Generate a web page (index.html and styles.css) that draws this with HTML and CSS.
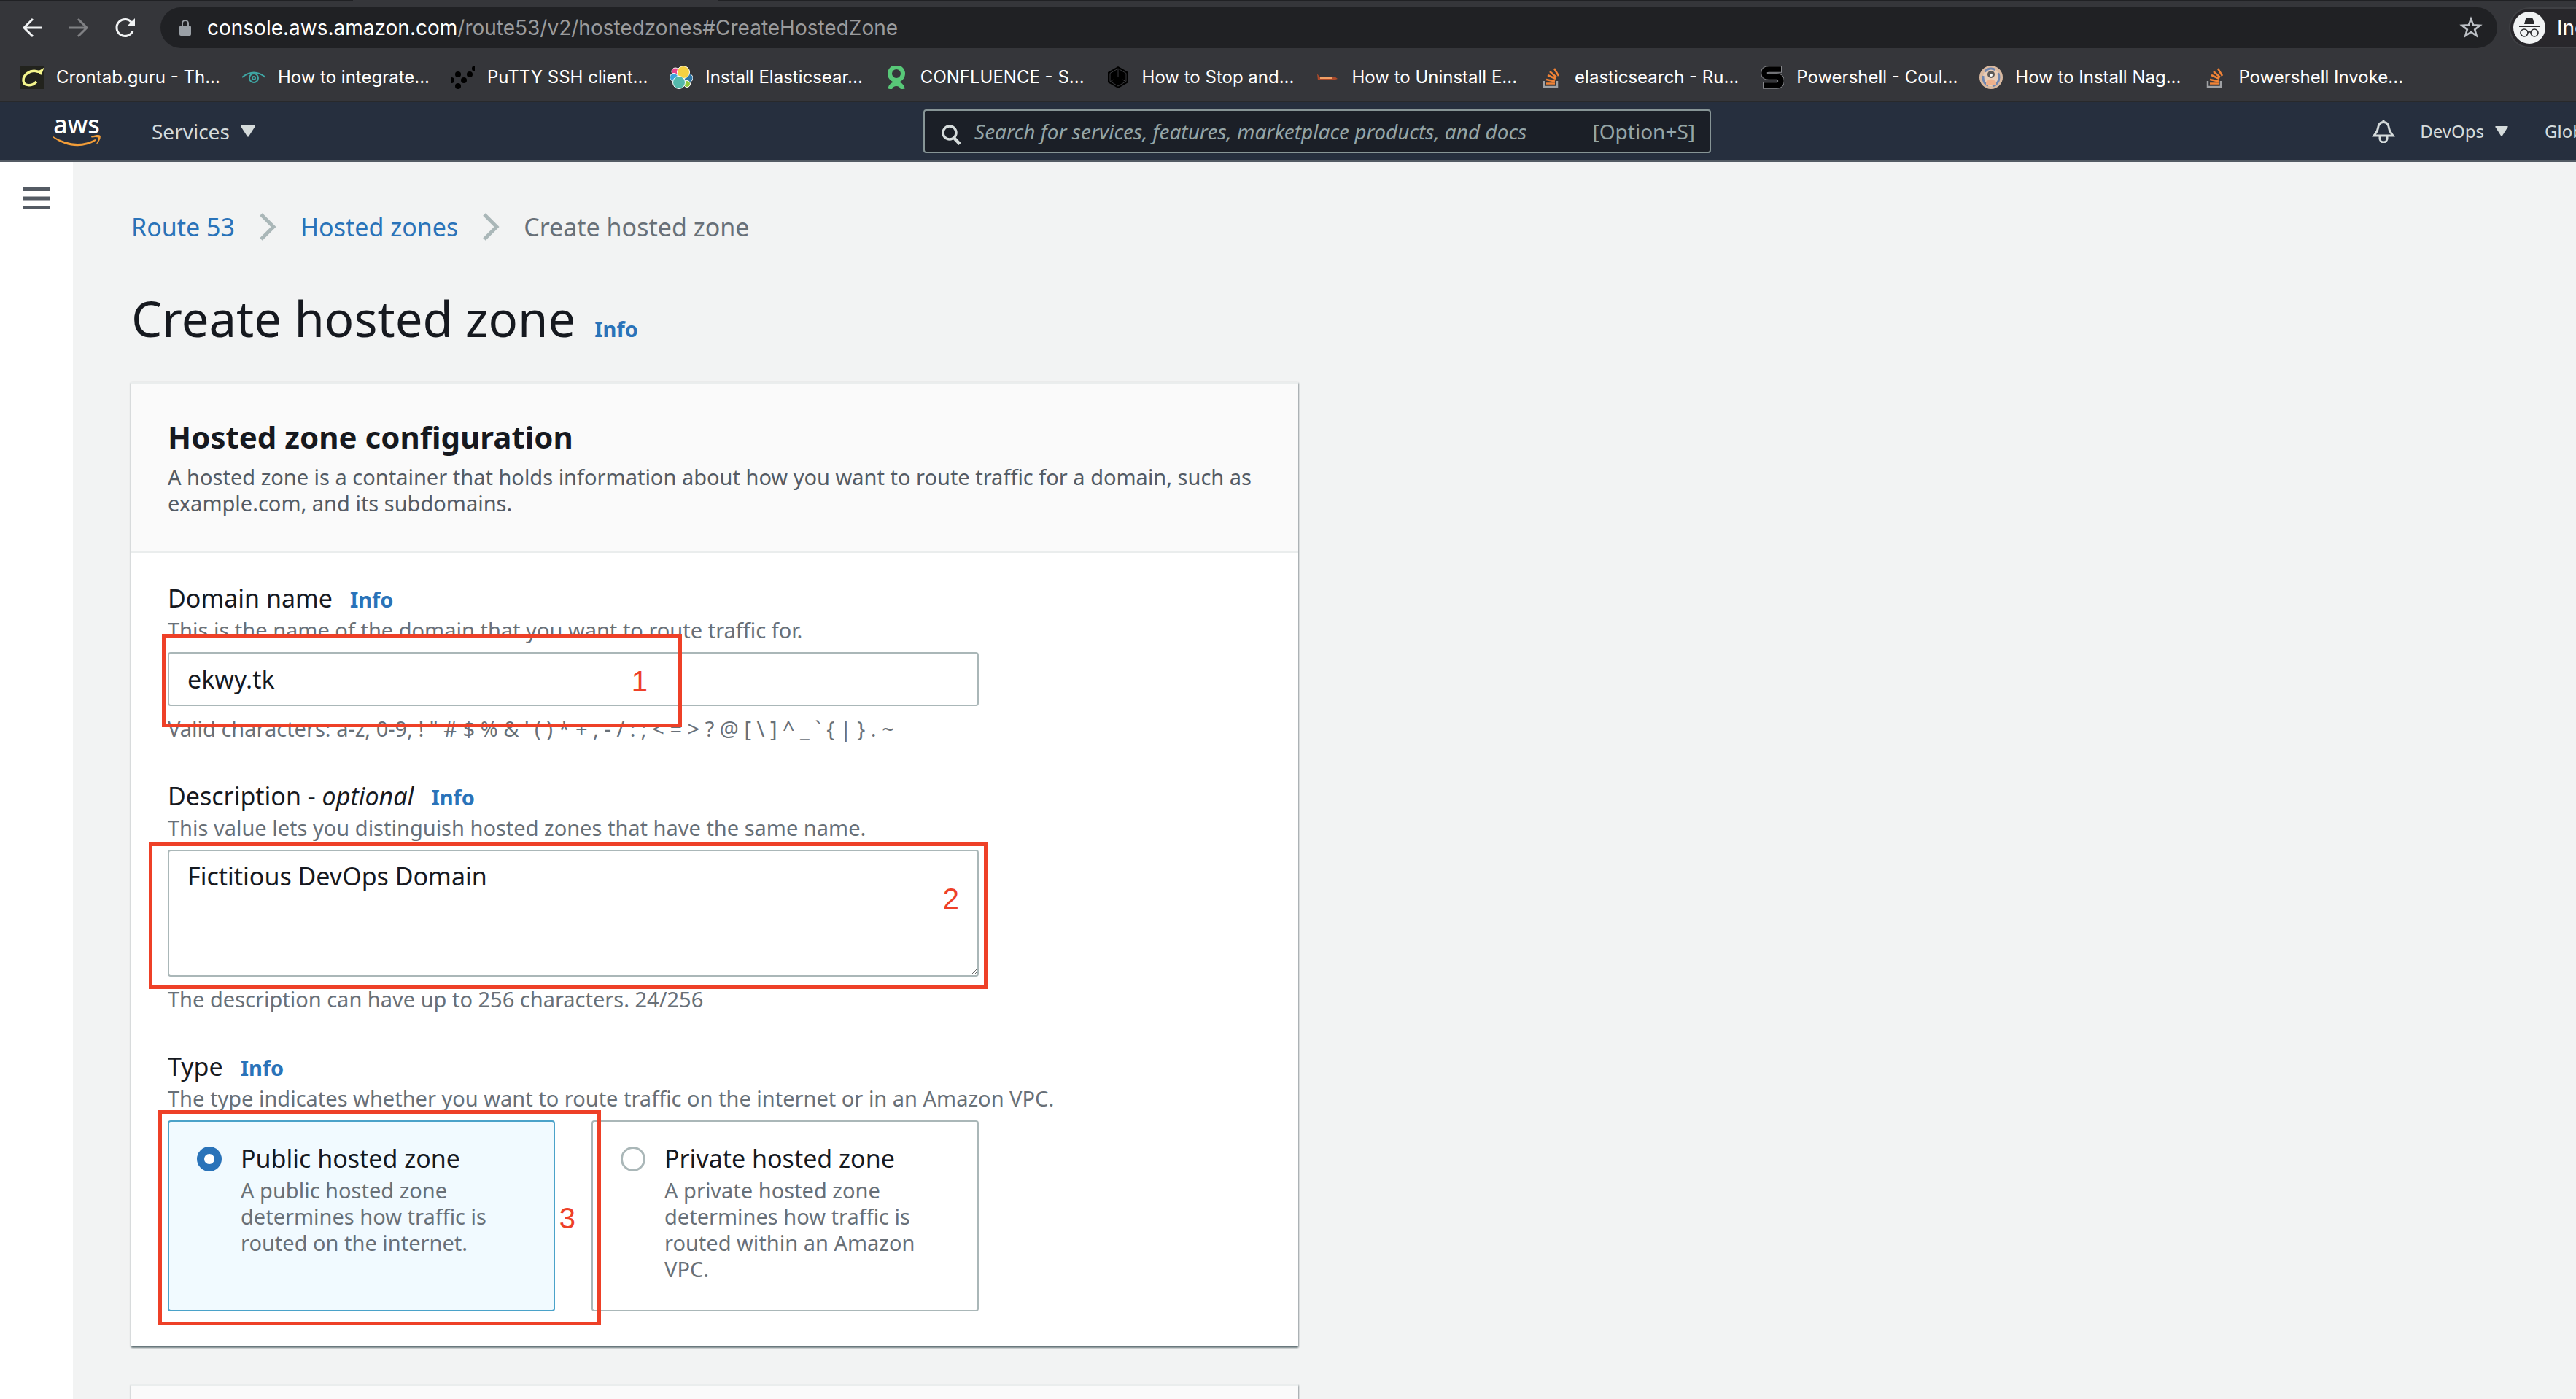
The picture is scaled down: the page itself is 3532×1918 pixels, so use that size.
FILE: index.html
```html
<!DOCTYPE html>
<html lang="en">
<head>
<meta charset="utf-8">
<title>Create hosted zone</title>
<link rel="stylesheet" href="styles.css">
</head>
<body>
<header class="browser">
  <div class="tab-edge"><span class="tab-active"></span></div>
  <div class="toolbar">
    <button class="tool" type="button" aria-label="Back">
      <svg width="32" height="32" viewBox="0 0 32 32" fill="none" stroke="#f1f3f4" stroke-width="3"><path d="M29 16H5M17 4 5 16l12 12"/></svg>
    </button>
    <button class="tool" type="button" aria-label="Forward">
      <svg width="32" height="32" viewBox="0 0 32 32" fill="none" stroke="#808184" stroke-width="3"><path d="M3 16h24M15 4l12 12-12 12"/></svg>
    </button>
    <button class="tool" type="button" aria-label="Reload">
      <svg width="32" height="32" viewBox="0 0 32 32"><path d="M26 20.500A11.500 11.500 0 1 1 25 9.500" fill="none" stroke="#f1f3f4" stroke-width="3"/><path d="M29 3v11H18z" fill="#f1f3f4"/></svg>
    </button>
    <div class="omnibox">
      <svg class="lock" width="16" height="22" viewBox="0 0 16 22"><rect y="8" width="16" height="14" rx="2" fill="#9aa0a6"/><path d="M4 9V5a4 4 0 0 1 8 0v4" fill="none" stroke="#9aa0a6" stroke-width="2"/></svg>
      <span class="url"><span class="url-host">console.aws.amazon.com</span>/route53/v2/hostedzones#CreateHostedZone</span>
      <button class="tool" type="button" aria-label="Bookmark this page">
        <svg width="32" height="32" viewBox="0 0 32 32"><path d="M16 4l3.200 8.400 9 .4-7 5.600 2.400 8.600L16 22l-7.600 5 2.400-8.600-7-5.600 9-.4z" fill="none" stroke="#bdc1c6" stroke-width="2.600"/></svg>
      </button>
    </div>
    <div class="incognito">
      <svg width="44" height="44" viewBox="0 0 44 44"><circle cx="22" cy="22" r="22" fill="#f1f3f4"/><path d="M15 17l2-7c.5-1.500 1.500-2 3-1.300q2 .8 4 0c1.500-.7 2.500-.2 3 1.300l2 7z" fill="#28292c"/><path d="M8 20h28" stroke="#28292c" stroke-width="2"/><g fill="none" stroke="#28292c" stroke-width="1.600"><circle cx="15" cy="29" r="5"/><circle cx="29" cy="29" r="5"/><path d="M20 28.500q2-1.500 4 0"/></g></svg>
      <span>Incognito</span>
    </div>
  </div>
  <nav class="bookmarks" aria-label="Bookmarks">
    <a href="#"><svg width="32" height="32" viewBox="0 0 32 32"><rect width="32" height="32" fill="#22231d"/><path d="M27 12l2-5q-3 2-6 1C13 5 4 13 4 20c0 8 11 9 18 2" fill="none" stroke="#f4f58c" stroke-width="3.500"/></svg>Crontab.guru - Th...</a>
    <a href="#"><svg width="32" height="32" viewBox="0 0 32 32" fill="none" stroke="#3fa6a4" stroke-width="2"><path d="M0 16Q16 3 32 16"/><circle cx="16" cy="17" r="6"/><circle cx="16" cy="17" r="2"/></svg>How to integrate...</a>
    <a href="#"><svg width="32" height="32" viewBox="0 0 32 32"><circle cx="9" cy="12" r="4"/><circle cx="25" cy="12" r="4"/><circle cx="17" cy="20" r="4"/><circle cx="9" cy="28" r="4"/><path d="M0 16a4 4 0 0 1 0 8zM32 0a4 4 0 0 0 0 8z"/></svg>PuTTY SSH client...</a>
    <a href="#"><svg width="32" height="32" viewBox="0 0 32 32" stroke="#fff" stroke-width="1"><circle cx="8" cy="8" r="5" fill="#e8478b"/><circle cx="26" cy="17" r="6" fill="#3076a5"/><circle cx="24" cy="25" r="4.500" fill="#93c83e"/><circle cx="6" cy="16" r="5.500" fill="#3ca3dc"/><ellipse cx="19" cy="9" rx="8.500" ry="8.500" fill="#f6d142"/><circle cx="13" cy="23" r="8.500" fill="#54b9ab"/></svg>Install Elasticsear...</a>
    <a href="#"><svg width="32" height="32" viewBox="0 0 32 32" fill="none" stroke="#58c878" stroke-width="6"><circle cx="16" cy="11" r="9"/><path d="M7 32q2-7 9-7t9 7"/></svg>CONFLUENCE - S...</a>
    <a href="#"><svg width="32" height="32" viewBox="0 0 32 32"><path d="M16 1l14 8v14l-14 8-14-8V9z"/><path d="M16 4l11 6.500v11L16 28 5 21.500v-11zM16 5v11M5 22l5-3M27 22l-5-3" fill="none" stroke="#3a3b3e"/></svg>How to Stop and...</a>
    <a href="#"><svg width="32" height="32" viewBox="0 0 32 32"><path d="M2 11l3 4h21l4 3-6 2H3z" fill="#a94a2b"/><path d="M6 16h17v2H6z" fill="#f2a065"/></svg>How to Uninstall E...</a>
    <a href="#"><svg width="32" height="32" viewBox="0 0 32 32" fill="none"><path d="M7 21v8h18v-8" stroke="#9fa1a4" stroke-width="2.500"/><path d="M10 24.500h12M10 19l12 2.500M12 13l11 5M15 8l9 8M21 4l6 10" stroke="#ef8236" stroke-width="2.500"/></svg>elasticsearch - Ru...</a>
    <a href="#"><svg width="32" height="32" viewBox="0 0 32 32" fill="none"><path d="M29 5H11q-6 0-6 5t6 5h11q6 0 6 6t-6 6H3" stroke="#85868a" stroke-width="9.500"/><path d="M28 5H11q-6 0-6 5t6 5h11q6 0 6 6t-6 6H4" stroke="#000" stroke-width="7.500"/></svg>Powershell - Coul...</a>
    <a href="#"><svg width="32" height="32" viewBox="0 0 32 32"><circle cx="16" cy="16" r="16" fill="#d9b9a0"/><ellipse cx="16" cy="16" rx="11" ry="12" fill="#e9cdb7" stroke="#6f86b0" stroke-width="3" stroke-dasharray="16 6"/><circle cx="16" cy="12" r="5" fill="#5d5a58"/><circle cx="16" cy="13" r="2" fill="#fff"/><path d="M9 22q7-7 14 0v4H9z" fill="#eeb18c"/></svg>How to Install Nag...</a>
    <a href="#"><svg width="32" height="32" viewBox="0 0 32 32" fill="none"><path d="M7 21v8h18v-8" stroke="#9fa1a4" stroke-width="2.500"/><path d="M10 24.500h12M10 19l12 2.500M12 13l11 5M15 8l9 8M21 4l6 10" stroke="#ef8236" stroke-width="2.500"/></svg>Powershell Invoke...</a>
  </nav>
</header>

<nav class="console-nav" aria-label="Console">
  <div class="nav-left">
    <a class="aws" href="#">
      <span>aws</span>
      <svg width="66" height="16" viewBox="0 0 66 16"><path d="M0 1.500Q31 20 58.500 6l1.500 1.500C42 19.500 18 17 0 3z" fill="#f29d38"/><path d="M53 2q9-3.500 12.500-1Q67 5 61 12.500l-.8-.6q3-6 2.300-8.400Q60 2.500 53.500 3.500z" fill="#f29d38"/></svg>
    </a>
    <button class="menu" type="button">Services <svg width="20" height="16" viewBox="0 0 20 16"><path d="M1 0h18q1.500 0 .7 1.500L11 15q-1 1.500-2 0L.3 1.500Q-.5 0 1 0z" fill="#d5dbdb"/></svg></button>
  </div>
  <form class="search">
    <svg width="28" height="28" viewBox="0 0 28 28" fill="none" stroke="#d5dbdb"><circle cx="12" cy="11" r="9" stroke-width="3.500"/><path d="M18 18l8 8.500" stroke-width="4.500"/></svg>
    <input type="search" aria-label="Search" placeholder="Search for services, features, marketplace products, and docs">
    <span>[Option+S]</span>
  </form>
  <div class="nav-right">
    <button class="menu" type="button" aria-label="Notifications"><svg width="32" height="32" viewBox="0 0 32 32" fill="none" stroke="#d5dbdb" stroke-width="3"><path d="M16 0v4M16 3.500c-5 0-7 4-7.500 8-.5 5-3 7-5.500 10.500h26c-2.500-3.500-5-5.500-5.500-10.500-.5-4-2.500-8-7.500-8z"/><path d="M11 23v3a5 5 0 0 0 10 0v-3"/></svg></button>
    <button class="menu menu-small" type="button">DevOps <svg width="18" height="14" viewBox="0 0 20 16"><path d="M1 0h18q1.500 0 .7 1.500L11 15q-1 1.500-2 0L.3 1.500Q-.5 0 1 0z" fill="#d5dbdb"/></svg></button>
    <button class="menu menu-small menu-cut" type="button">Global</button>
  </div>
</nav>

<div class="page">
  <aside class="side">
    <button type="button" aria-label="Open navigation"><svg width="36" height="30" viewBox="0 0 36 30" fill="#545b64"><path d="M0 0h36v5H0zM0 12.500h36v5H0zM0 25h36v5H0z"/></svg></button>
  </aside>
  <main class="main">
    <nav class="crumbs" aria-label="Breadcrumb">
      <a href="#">Route 53</a>
      <svg width="24" height="38" viewBox="0 0 24 38"><path d="M3 2l17 17L3 36" fill="none" stroke="#aab7b8" stroke-width="5"/></svg>
      <a href="#">Hosted zones</a>
      <svg width="24" height="38" viewBox="0 0 24 38"><path d="M3 2l17 17L3 36" fill="none" stroke="#aab7b8" stroke-width="5"/></svg>
      <span>Create hosted zone</span>
    </nav>
    <div class="title"><h1>Create hosted zone</h1><a class="info" href="#">Info</a></div>

    <section class="card">
      <div class="card-head">
        <h2>Hosted zone configuration</h2>
        <p>A hosted zone is a container that holds information about how you want to route traffic for a domain, such as example.com, and its subdomains.</p>
      </div>
      <form class="card-body">
        <div class="field">
          <div class="label"><label for="domain">Domain name</label><a class="info" href="#">Info</a></div>
          <p class="hint">This is the name of the domain that you want to route traffic for.</p>
          <div class="control">
            <input class="box" id="domain" type="text" value="ekwy.tk">
            <div class="mark mark-one">1</div>
          </div>
          <p class="hint">Valid characters: a-z, 0-9, ! " # $ % &amp; ' ( ) * + , - / : ; &lt; = &gt; ? @ [ \ ] ^ _ ` { | } . ~</p>
        </div>
        <div class="field">
          <div class="label"><label for="description">Description - <em>optional</em></label><a class="info" href="#">Info</a></div>
          <p class="hint">This value lets you distinguish hosted zones that have the same name.</p>
          <div class="control">
            <textarea class="box" id="description">Fictitious DevOps Domain</textarea>
            <div class="mark mark-two">2</div>
          </div>
          <p class="hint">The description can have up to 256 characters. 24/256</p>
        </div>
        <div class="field">
          <div class="label"><span id="type">Type</span><a class="info" href="#">Info</a></div>
          <p class="hint">The type indicates whether you want to route traffic on the internet or in an Amazon VPC.</p>
          <div class="control tiles" role="radiogroup" aria-labelledby="type">
            <label class="tile tile-on">
              <input type="radio" name="type" checked>
              <span class="tile-text"><span class="tile-name">Public hosted zone</span><span class="hint">A public hosted zone determines how traffic is routed on the internet.</span></span>
            </label>
            <label class="tile">
              <input type="radio" name="type">
              <span class="tile-text"><span class="tile-name">Private hosted zone</span><span class="hint">A private hosted zone determines how traffic is routed within an Amazon VPC.</span></span>
            </label>
            <div class="mark mark-three">3</div>
          </div>
        </div>
      </form>
    </section>

    <section class="card"><div class="card-head"></div></section>
  </main>
</div>
</body>
</html>
```
FILE: styles.css
```css
* { box-sizing: border-box; }
body {
  margin: 0;
  height: 100vh;
  overflow: hidden;
  display: flex;
  flex-direction: column;
  background: #f2f3f3;
  font-family: "Noto Sans", sans-serif;
  font-size: 29px;
  line-height: 36px;
  color: #16191f;
}
h1, h2, p { margin: 0; font-weight: 400; }
a { color: #2a73b9; text-decoration: none; }
button { padding: 0; border: 0; background: none; font: inherit; color: inherit; }
svg { display: block; flex: none; }

/* Browser chrome */
.browser {
  flex: none;
  background: #35363a;
  border-bottom: 2px solid #28292b;
  font-family: Inter, "Liberation Sans", sans-serif;
  color: #fff;
}
.tab-edge { height: 2px; padding-left: 484px; background: #202124; }
.tab-active { display: block; width: 500px; height: 2px; background: #35363a; }
.toolbar { display: flex; align-items: center; gap: 32px; padding: 8px 0 0 28px; }
.omnibox {
  flex: 1;
  display: flex;
  align-items: center;
  height: 56px;
  margin-right: -16px;
  padding: 0 20px 0 26px;
  border-radius: 28px;
  background: #202124;
  font-size: 28px;
}
.lock { margin-right: 22px; }
.url { flex: 1; color: #9a9b9d; }
.url-host { color: #fff; }
.incognito {
  flex: 0 0 92px;
  display: flex;
  align-items: center;
  gap: 16px;
  height: 56px;
  padding-left: 4px;
  overflow: hidden;
  border: 2px solid #3f4044;
  border-right: 0;
  border-radius: 28px 0 0 28px;
  background: #28272b;
  font-size: 28px;
}
.bookmarks { display: flex; align-items: center; gap: 30px; height: 72px; padding: 8px 28px 0; font-size: 24px; white-space: nowrap; }
.bookmarks a { display: flex; align-items: center; gap: 17px; height: 32px; color: #fff; }

/* Console navigation */
.console-nav {
  flex: none;
  display: flex;
  align-items: center;
  height: 82px;
  padding-left: 72px;
  background: #262f3e;
  border-bottom: 2px solid #545b64;
  color: #d5dbdb;
}
.nav-left { flex: 1 1 0; display: flex; align-items: center; gap: 70px; margin-right: 8px; }
.aws { width: 66px; padding-bottom: 4px; color: #fff; font-size: 34px; line-height: 30px; text-align: center; font-weight: 500; }
.menu { display: flex; align-items: center; gap: 15px; font-size: 28px; white-space: nowrap; }
.menu-small { font-size: 24px; }
.search {
  flex: 0 1 1080px;
  display: flex;
  align-items: center;
  height: 60px;
  padding: 0 20px 0 22px;
  border: 2px solid #879596;
  border-radius: 4px;
  background: #1b1f27;
  font-size: 28px;
  color: #95a5a6;
}
.search svg { margin-right: 18px; margin-top: 10px; }
.search input { flex: 1; min-width: 0; padding: 0; border: 0; outline: 0; background: none; color: #d5dbdb; font: inherit; }
.search input::placeholder { color: #95a5a6; font-style: italic; opacity: 1; }
.nav-right { flex: 1 1 0; display: flex; align-items: center; justify-content: flex-end; gap: 34px; }
.menu-cut { flex: 0 0 43px; margin-left: 16px; overflow: hidden; }

/* Page */
.page { flex: 1; display: flex; min-height: 0; }
.side { flex: 0 0 100px; padding: 35px 32px; background: #fff; }
.main { flex: 1; min-width: 0; padding: 69px 80px 0; }
.crumbs { display: flex; align-items: center; gap: 33px; margin-bottom: 65px; font-size: 34px; line-height: 40px; }
.crumbs span { color: #687078; }
.title { display: flex; align-items: baseline; gap: 26px; margin-bottom: 48px; }
.title h1 { font-size: 67px; line-height: 80px; }
.info { font-size: 29px; line-height: 36px; font-weight: 700; }

.card {
  max-width: 1600px;
  margin-bottom: 52px;
  border-top: 2px solid #eaeded;
  background: #fff;
  box-shadow: 0 2px 2px rgba(0, 28, 36, .4), 1px 1px 2px rgba(0, 28, 36, .25), -1px 1px 2px rgba(0, 28, 36, .25);
}
.card-head { padding: 48px 50px; background: #fafafa; border-bottom: 2px solid #eaeded; color: #545b64; }
.card-head h2 { margin-bottom: 12px; font-size: 42px; line-height: 50px; font-weight: 700; color: #16191f; }
.card-body { display: flex; flex-direction: column; gap: 52px; padding: 40px 50px 48px; }

.label { display: flex; align-items: baseline; gap: 24px; margin-bottom: 4px; font-size: 34px; line-height: 44px; }
.hint { color: #687078; font-size: 29px; line-height: 36px; }
.control { position: relative; max-width: 1112px; margin-top: 12px; }
.control + .hint { margin-top: 13px; }
.box {
  display: block;
  width: 100%;
  height: 74px;
  margin: 0;
  padding: 12px 25px;
  border: 2px solid #aab7b8;
  border-radius: 4px;
  outline: 0;
  background: #fff;
  color: #16191f;
  font: 34px/44px "Noto Sans", sans-serif;
}
textarea.box { height: 174px; resize: both; }

.tiles { display: grid; grid-template-columns: 1fr 1fr; gap: 50px; }
.tile { display: flex; gap: 26px; min-height: 262px; padding: 28px 38px 24px; border: 2px solid #aab7b8; border-radius: 4px; }
.tile-on { border-color: #4aa2c9; background: #f1faff; }
.tile input { appearance: none; flex: none; width: 34px; height: 34px; margin: 6px 0 0; border: 3px solid #aab7b8; border-radius: 50%; background: #fff; }
.tile input:checked { border: 10px solid #2a73b9; }
.tile-text { display: flex; flex-direction: column; }
.tile-name { font-size: 34px; line-height: 44px; margin-bottom: 4px; }

/* Step markers drawn over the form */
.mark {
  position: absolute;
  border: 5px solid #ee4027;
  color: #ee4027;
  font: 40px/40px "Liberation Sans", Arial, sans-serif;
  text-align: right;
  pointer-events: none;
}
.mark-one { left: -8px; top: -25px; width: 713px; height: 128px; padding: 40px 42px 0 0; }
.mark-two { left: -26px; top: -10px; width: 1150px; height: 201px; padding: 52px 34px 0 0; }
.mark-three { left: -13px; top: -14px; width: 607px; height: 295px; padding: 123px 30px 0 0; }
```
